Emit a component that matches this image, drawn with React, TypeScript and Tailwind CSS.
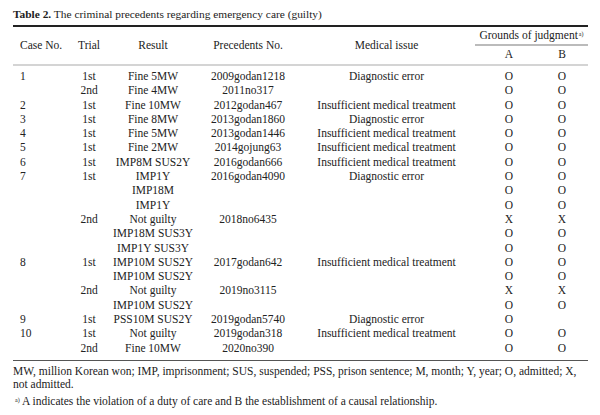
import React from "react";

type Row = [string, string, string, string, string, string, string];

const INS = "Insufficient medical treatment";
const DIA = "Diagnostic error";

const rows: Row[] = [
  ["1", "1st", "Fine 5MW", "2009godan1218", DIA, "O", "O"],
  ["", "2nd", "Fine 4MW", "2011no317", "", "O", "O"],
  ["2", "1st", "Fine 10MW", "2012godan467", INS, "O", "O"],
  ["3", "1st", "Fine 8MW", "2013godan1860", DIA, "O", "O"],
  ["4", "1st", "Fine 5MW", "2013godan1446", INS, "O", "O"],
  ["5", "1st", "Fine 2MW", "2014gojung63", INS, "O", "O"],
  ["6", "1st", "IMP8M SUS2Y", "2016godan666", INS, "O", "O"],
  ["7", "1st", "IMP1Y", "2016godan4090", DIA, "O", "O"],
  ["", "", "IMP18M", "", "", "O", "O"],
  ["", "", "IMP1Y", "", "", "O", "O"],
  ["", "2nd", "Not guilty", "2018no6435", "", "X", "X"],
  ["", "", "IMP18M SUS3Y", "", "", "O", "O"],
  ["", "", "IMP1Y SUS3Y", "", "", "O", "O"],
  ["8", "1st", "IMP10M SUS2Y", "2017godan642", INS, "O", "O"],
  ["", "", "IMP10M SUS2Y", "", "", "O", "O"],
  ["", "2nd", "Not guilty", "2019no3115", "", "X", "X"],
  ["", "", "IMP10M SUS2Y", "", "", "O", "O"],
  ["9", "1st", "PSS10M SUS2Y", "2019godan5740", DIA, "O", ""],
  ["10", "1st", "Not guilty", "2019godan318", INS, "O", "O"],
  ["", "2nd", "Fine 10MW", "2020no390", "", "O", "O"],
];

const cols = "grid grid-cols-[57px_38px_90px_100px_177px_68px_45px]";

export default function App() {
  return (
    <div
      className="w-[600px] h-[415px] bg-white text-[#222] overflow-hidden"
      style={{ fontFamily: '"Liberation Serif", "Times New Roman", serif' }}
    >
      <div className="px-[13px] pt-[7px] text-[11.4px] leading-[14px]">
        <span className="font-bold">Table 2.</span> The criminal precedents regarding emergency care (guilty)
      </div>
      <div className="mx-[13px] w-[575px] mt-[4px] border-t-[2px] border-[#222] text-[11.5px]">
        {/* header */}
        <div className="flex h-[39px] border-b-[2px] border-[#d4d4d4]">
          <div className="flex items-center w-[57px] pl-[7px]">Case No.</div>
          <div className="flex items-center justify-center w-[38px]">Trial</div>
          <div className="flex items-center justify-center w-[90px]">Result</div>
          <div className="flex items-center justify-center w-[100px]">Precedents No.</div>
          <div className="flex items-center justify-center w-[177px]">Medical issue</div>
          <div className="flex flex-col w-[113px]">
            <div className="h-[19px] flex items-center justify-center border-b-[2px] border-[#bbb] pt-[1px]">
              <span>
                Grounds of judgment
                <sup className="text-[6px] ml-[1px]">a)</sup>
              </span>
            </div>
            <div className="flex flex-1 items-center">
              <div className="w-[68px] text-center">A</div>
              <div className="w-[45px] text-center pr-[7px]">B</div>
            </div>
          </div>
        </div>
        {/* body */}
        <div className="pt-[3px] pb-[5px] border-b border-[#555]">
          {rows.map((r, i) => (
            <div key={i} className={`${cols} h-[14.3px] leading-[14.3px]`}>
              <div className="pl-[7px]">{r[0]}</div>
              <div className="text-center">{r[1]}</div>
              <div className="text-center">{r[2]}</div>
              <div className="text-center">{r[3]}</div>
              <div className="text-center whitespace-nowrap">{r[4]}</div>
              <div className="text-center">{r[5]}</div>
              <div className="text-center pr-[7px]">{r[6]}</div>
            </div>
          ))}
        </div>
      </div>
      <div className="px-[13px] pt-[4px] text-[11.5px] leading-[13px]">
        MW, million Korean won; IMP, imprisonment; SUS, suspended; PSS, prison sentence; M, month; Y, year; O, admitted; X,
        not admitted.
      </div>
      <div className="px-[13px] pl-[15px] pt-[4px] text-[11.5px] leading-[13px]">
        <sup className="text-[6px]">a)</sup> A indicates the violation of a duty of care and B the establishment of a causal relationship.
      </div>
    </div>
  );
}
